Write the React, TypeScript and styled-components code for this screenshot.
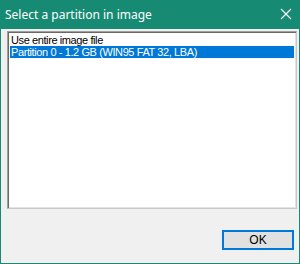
import React from "react";
import styled, { createGlobalStyle } from "styled-components";

const Global = createGlobalStyle`
  html, body { margin: 0; padding: 0; background: #f0f0f0; }
  #root { width: 300px; height: 264px; }
`;

const Window = styled.div`
  box-sizing: border-box;
  width: 300px;
  height: 264px;
  display: flex;
  flex-direction: column;
  background: #f0f0f0;
  border: 1px solid #168a73;
  border-top: none;
`;

const TitleBar = styled.div`
  height: 29px;
  flex: none;
  background: #168a73;
  display: flex;
  align-items: center;
  justify-content: space-between;
  padding: 0 8px 0 5px;
  margin: 0 -1px;
`;

const Title = styled.span`
  color: #ffffff;
  font-family: "Noto Sans", "Segoe UI", sans-serif;
  font-size: 12px;
  margin-top: -1px;
`;

const CloseButton = styled.div`
  width: 12px;
  height: 12px;
  display: flex;
  margin-top: -2px;
`;

const Body = styled.div`
  flex: 1;
  display: flex;
  flex-direction: column;
  padding: 2px 2px 0 6px;
`;

const ListBox = styled.div`
  box-sizing: border-box;
  height: 178px;
  background: #ffffff;
  border: 1px solid #a0a0a0;
  border-right-color: #c8c8c8;
  border-bottom-color: #c8c8c8;
  box-shadow: inset 1px 1px 0 #696969, inset -1px -1px 0 #e3e3e3;
  padding: 2px 2px;
  display: flex;
  flex-direction: column;
`;

const Row = styled.div<{ $selected?: boolean }>`
  height: 12px;
  line-height: 12px;
  padding-left: 1px;
  font-family: "Liberation Sans", Arial, sans-serif;
  font-size: 11px;
  letter-spacing: -0.4px;
  color: ${(p) => (p.$selected ? "#ffffff" : "#000000")};
  background: ${(p) => (p.$selected ? "#0078d7" : "transparent")};
  white-space: nowrap;
`;

const Footer = styled.div`
  flex: 1;
  display: flex;
  justify-content: flex-end;
  align-items: flex-start;
  padding: 21px 3px 0 0;
`;

const Button = styled.button`
  box-sizing: border-box;
  width: 72px;
  height: 20px;
  background: #e1e1e1;
  border: 1px solid #0078d7;
  box-shadow: inset 0 0 0 1px #0078d7;
  font-family: "Liberation Sans", Arial, sans-serif;
  font-size: 12px;
  color: #000;
  padding: 0;
  border-radius: 0;
`;

export default function App() {
  return (
    <>
      <Global />
      <Window>
        <TitleBar>
          <Title>Select a partition in image</Title>
          <CloseButton>
            <svg width="12" height="12" viewBox="0 0 12 12">
              <path d="M1 1 L11 11 M11 1 L1 11" stroke="#ffffff" strokeWidth="1.2" fill="none" />
            </svg>
          </CloseButton>
        </TitleBar>
        <Body>
          <ListBox>
            <Row>Use entire image file</Row>
            <Row $selected>Partition 0 - 1.2 GB (WIN95 FAT 32, LBA)</Row>
          </ListBox>
          <Footer>
            <Button>OK</Button>
          </Footer>
        </Body>
      </Window>
    </>
  );
}
